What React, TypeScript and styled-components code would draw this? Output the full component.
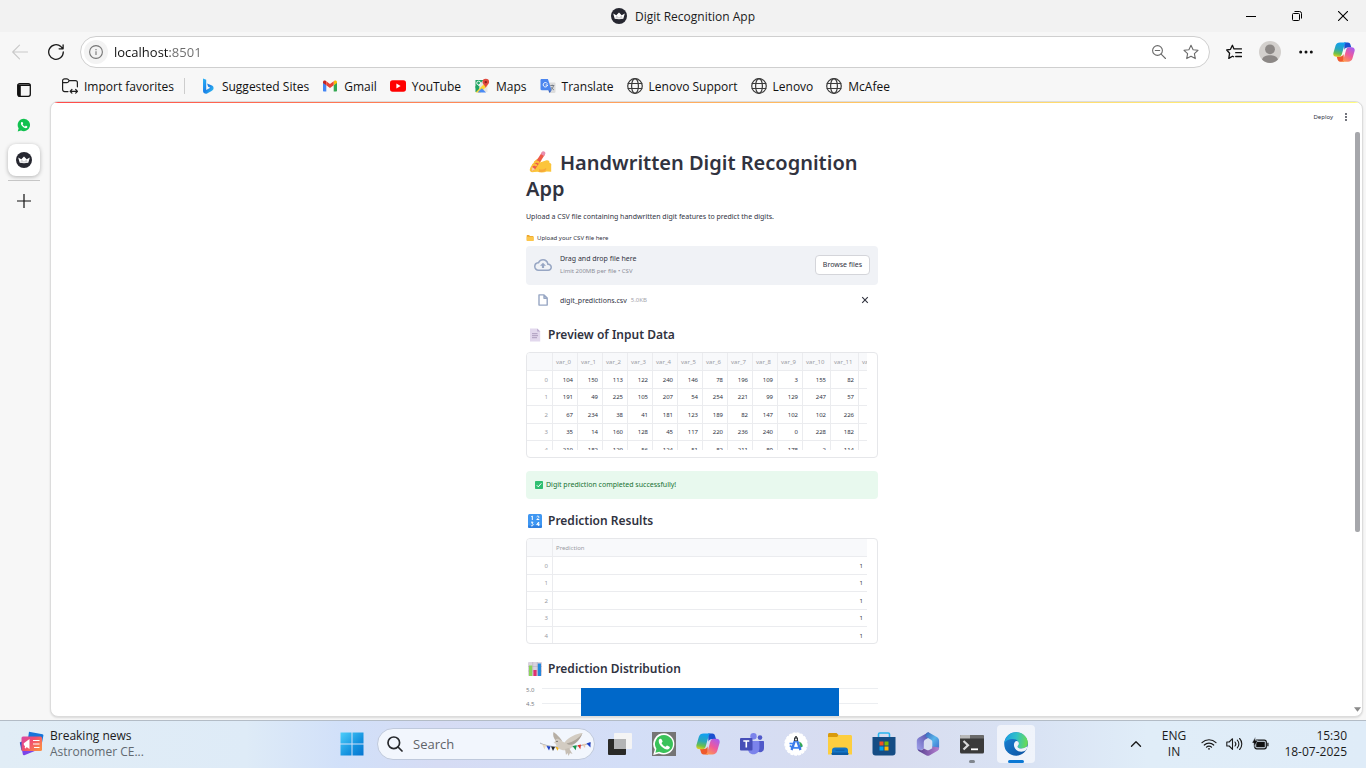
import React from 'react';
import styled, { createGlobalStyle, css } from 'styled-components';

const uiFont = '"Open Sans", "Noto Sans", sans-serif';
const appFont = '"Noto Sans", sans-serif';

const GlobalStyle = createGlobalStyle`
  *, *::before, *::after { box-sizing: border-box; }
  html, body { margin: 0; padding: 0; }
  body { font-family: ${uiFont}; font-size: 12px; color: #1b1b1b; background: #f7f7f7; }
  button, input { font: inherit; color: inherit; border: 0; background: none; padding: 0; margin: 0; outline: 0; }
  h1, h2, p { margin: 0; }
  svg { display: block; flex: none; }
`;

/* ---------- window frame ---------- */

const Window = styled.div`
  display: flex;
  flex-direction: column;
  height: 100vh;
  overflow: hidden;
`;

const TitleBar = styled.header`
  display: grid;
  grid-template-columns: 1fr auto 1fr;
  align-items: center;
  flex: none;
  height: 32px;
  background: #f2f2f2;
`;

const WindowTitle = styled.div`
  grid-column: 2;
  display: flex;
  align-items: center;
  gap: 8px;
`;

const WindowControls = styled.div`
  display: flex;
  justify-content: flex-end;
`;

const ControlButton = styled.button`
  display: grid;
  place-items: center;
  width: 46px;
  height: 32px;
`;

const Toolbar = styled.nav`
  display: flex;
  align-items: center;
  flex: none;
  height: 40px;
  padding: 0 2px;
`;

const ToolButton = styled.button<{ $wide?: boolean }>`
  display: grid;
  place-items: center;
  flex: none;
  width: ${(p) => (p.$wide ? 40 : 36)}px;
  height: 32px;
`;

const AddressBar = styled.form`
  display: flex;
  align-items: center;
  flex: 1;
  height: 32px;
  margin: 0 6px;
  padding: 0 2px 0 3px;
  border: 1px solid #cfcfcf;
  border-radius: 16px;
  background: #fff;
`;

const SiteInfo = styled.button`
  display: grid;
  place-items: center;
  width: 24px;
  height: 24px;
  border-radius: 12px;
  background: #f3f3f3;
`;

const AddressInput = styled.input`
  flex: 1;
  min-width: 0;
  margin-left: 6px;
  font-size: 13px;
  background: linear-gradient(90deg, #111 56px, #6b6b6b 56px);
  background-clip: text;
  color: transparent;
`;

const AddressAction = styled.button`
  display: grid;
  place-items: center;
  width: 32px;
  height: 28px;
`;

const Body = styled.div`
  display: flex;
  flex: 1;
  min-height: 0;
`;

const SideTabs = styled.aside`
  display: flex;
  flex-direction: column;
  align-items: center;
  flex: none;
  gap: 3px;
  width: 48px;
  margin-right: 2px;
  padding-top: 2px;
`;

const SideTab = styled.button<{ $active?: boolean }>`
  display: grid;
  place-items: center;
  width: 32px;
  height: 32px;
  border-radius: 8px;
  ${(p) =>
    p.$active &&
    css`
      background: #fff;
      box-shadow: 0 1px 4px rgba(0, 0, 0, 0.28);
    `}
`;

const SideDivider = styled.div`
  width: 32px;
  height: 1px;
  margin: 1px 0;
  background: #c6c6c6;
`;

const MainColumn = styled.div`
  display: flex;
  flex-direction: column;
  flex: 1;
  min-width: 0;
  padding: 0 3px 3px 0;
`;

const Bookmarks = styled.nav`
  display: flex;
  align-items: center;
  flex: none;
  gap: 13px;
  height: 28px;
  margin-bottom: 1px;
  padding-left: 12px;
`;

const BookmarkLink = styled.a`
  display: flex;
  align-items: center;
  gap: 6px;
  color: #111;
  text-decoration: none;
  white-space: nowrap;
`;

const BookmarkDivider = styled.span`
  width: 1px;
  height: 16px;
  margin: 0 2px 0 -3px;
  background: #cdcdcd;
`;

/* ---------- app page ---------- */

const Panel = styled.div`
  display: flex;
  flex: 1;
  min-height: 0;
  border: 1px solid #dcdcdc;
  border-radius: 8px;
  background: #fff;
  box-shadow: 0 1px 2px rgba(0, 0, 0, 0.12);
  overflow: hidden;
  font-family: ${appFont};
  color: #31333f;
`;

const Page = styled.div`
  display: flex;
  flex-direction: column;
  flex: 1;
  min-width: 0;
`;

const PanelColumn = styled.div`
  display: flex;
  flex-direction: column;
  flex: 1;
  min-width: 0;
`;

const AccentLine = styled.div`
  flex: none;
  height: 1px;
  background: linear-gradient(90deg, #ff4b4b, #ffc363 60%, #fffd80);
`;

const PageRow = styled.div`
  display: flex;
  flex: 1;
  min-height: 0;
`;

const AppHeader = styled.header`
  display: flex;
  align-items: center;
  justify-content: flex-end;
  flex: none;
  gap: 9px;
  height: 30px;
  padding: 0 3px 2px 0;
`;

const DeployButton = styled.button`
  font-size: 6px;
  line-height: 12px;
`;

const MenuButton = styled.button`
  display: grid;
  place-items: center;
  width: 8px;
  height: 12px;
`;

const Content = styled.main`
  width: 100%;
  max-width: 352px;
  margin: 0 auto;
  padding-top: 17px;
`;

const Title = styled.h1`
  font-size: 20px;
  font-weight: 600;
  line-height: 26px;

  svg {
    display: inline-block;
    margin: 0 8px 0 2px;
    vertical-align: -4px;
  }
`;

const Intro = styled.p`
  margin-top: 9px;
  font-size: 7px;
  line-height: 12px;
`;

const UploadLabel = styled.label`
  display: flex;
  align-items: center;
  gap: 3px;
  margin-top: 10px;
  font-size: 6px;
  line-height: 10px;
`;

const DropZone = styled.div`
  display: flex;
  align-items: center;
  height: 39px;
  margin-top: 3px;
  padding: 0 8px 1px;
  border-radius: 4px;
  background: #f0f2f6;
`;

const DropText = styled.div`
  display: flex;
  flex-direction: column;
  flex: 1;
  margin-left: 8px;
`;

const DropTitle = styled.span`
  font-size: 7px;
  line-height: 12px;
`;

const DropHint = styled.span`
  font-size: 6px;
  line-height: 12px;
  color: #8d8f99;
`;

const BrowseButton = styled.button`
  width: 55px;
  height: 20px;
  padding-bottom: 1px;
  border: 1px solid #d4d5da;
  border-radius: 4px;
  background: #fff;
  font-size: 7px;
`;

const FileRow = styled.div`
  display: flex;
  align-items: center;
  height: 30px;
  padding: 0 9px 0 12px;
`;

const FileName = styled.span`
  margin-left: 12px;
  font-size: 7px;
`;

const FileSize = styled.span`
  flex: 1;
  margin-left: 4px;
  font-size: 6px;
  color: #a3a4ac;
`;

const Heading = styled.h2<{ $space: number }>`
  display: flex;
  align-items: center;
  gap: 6px;
  margin-top: ${(p) => p.$space}px;
  padding-left: 2px;
  font-size: 12px;
  font-weight: 600;
  line-height: 17px;
`;

const TableFrame = styled.div`
  height: 106px;
  margin-top: 9px;
  padding-right: 10px;
  border: 1px solid #e6e7ea;
  border-radius: 4px;
  overflow: hidden;
`;

const TableClip = styled.div<{ $short?: boolean }>`
  height: ${(p) => (p.$short ? 97 : 104)}px;
  overflow: hidden;
`;

const DataTable = styled.table`
  width: 100%;
  table-layout: fixed;
  border-spacing: 0;
  font-size: 6px;
  line-height: 12px;

  tr { height: 18px; }
  tbody tr:nth-child(even) { height: 17px; }

  th, td {
    height: inherit;
    padding: 0 4px 0 3px;
    border-right: 1px solid #ebecef;
    border-bottom: 1px solid #ebecef;
    font-weight: 400;
    text-align: right;
    white-space: nowrap;
    overflow: hidden;
  }
  th { color: #9a9ba3; }
  thead th { padding-right: 0; background: #f8f9fb; text-align: left; }
  tr > :last-child { border-right: 0; }
`;

const Alert = styled.div`
  display: flex;
  align-items: center;
  gap: 3px;
  height: 28px;
  margin-top: 13px;
  padding: 0 9px 1px;
  border-radius: 4px;
  background: #e8f9ee;
  color: #177233;
  font-size: 7px;
`;

const Chart = styled.svg`
  width: 100%;
  height: 120px;
  margin-top: 7px;
  font-family: ${appFont};
  font-size: 6px;
  fill: #7d7f88;
`;

const ScrollRail = styled.div`
  display: flex;
  flex-direction: column;
  justify-content: space-between;
  align-items: center;
  flex: none;
  width: 9px;
  padding: 29px 0 4px;
`;

const ScrollThumb = styled.div`
  width: 5px;
  height: 69%;
  border-radius: 2px;
  background: #a6a7ab;
`;

/* ---------- taskbar ---------- */

const Taskbar = styled.footer`
  display: grid;
  grid-template-columns: 1fr auto 1fr;
  align-items: center;
  flex: none;
  height: 48px;
  padding: 0 0 2px 2px;
  border-top: 1px solid #b3bcc6;
  background: linear-gradient(90deg, #e1edf6 0%, #deebf7 18%, #d1e0f9 25%, #d6dcf4 32%, #d3def7 46%, #d8dcef 64%, #d9e3f4 76%, #e0edf8 84%, #dfecf8 100%);
`;

const Widget = styled.button`
  display: flex;
  align-items: center;
  justify-self: start;
  gap: 6px;
  padding-left: 17px;
  text-align: left;
  line-height: 16px;
`;

const WidgetText = styled.span`
  display: flex;
  flex-direction: column;
`;

const Muted = styled.span`
  color: #626a71;
`;

const TaskGroup = styled.div`
  display: flex;
  align-items: center;
`;

const TaskButton = styled.button`
  position: relative;
  display: grid;
  place-items: center;
  width: 44px;
  height: 45px;
`;

const TaskTile = styled.span<{ $active?: boolean }>`
  display: grid;
  place-items: center;
  width: 38px;
  height: 38px;
  border-radius: 4px;
  background: ${(p) => (p.$active ? 'rgba(255, 255, 255, 0.6)' : 'transparent')};
`;

const RunMark = styled.span<{ $active?: boolean }>`
  position: absolute;
  bottom: 3px;
  left: 50%;
  width: ${(p) => (p.$active ? 16 : 6)}px;
  height: 3px;
  border-radius: 2px;
  transform: translateX(-50%);
  background: ${(p) => (p.$active ? '#0b78d4' : '#80858d')};
`;

const SearchBox = styled.label`
  display: flex;
  align-items: center;
  gap: 10px;
  width: 218px;
  height: 32px;
  margin: 0 3px;
  padding: 0 1px 0 9px;
  border: 1px solid #bfc9dc;
  border-radius: 16px;
  background: #f2f6fd;
`;

const SearchInput = styled.input`
  flex: 1;
  min-width: 0;
  font-size: 13px;
  &::placeholder { color: #5f6368; opacity: 1; }
`;

const Tray = styled.div`
  display: flex;
  align-items: center;
  justify-content: flex-end;
  padding-right: 19px;
  line-height: 16px;
`;

const TrayButton = styled.button<{ $width: number }>`
  display: flex;
  align-items: center;
  justify-content: space-around;
  width: ${(p) => p.$width}px;
`;

const Stack = styled.span`
  display: flex;
  flex-direction: column;
  align-items: center;
`;

const Clock = styled.span`
  display: flex;
  flex: 1;
  flex-direction: column;
  align-items: flex-end;
`;

/* ---------- icons ---------- */

const line = { fill: 'none', stroke: 'currentColor', strokeLinecap: 'round', strokeLinejoin: 'round' } as const;

const CrownIcon = () => (
  <svg width="16" height="16" viewBox="0 0 16 16">
    <circle cx="8" cy="8" r="8" fill="#262730" />
    <path d="M2.2 5.600 5.300 7.200 8 4.600l2.700 2.600 3.100-1.600-1.500 5.200c-2.800.6-5.800.6-8.600 0z" fill="#fff" />
    <path d="M5.300 7.200 8 9.400l2.700-2.200 1 3.300H4.300z" fill="#d5d5d8" />
  </svg>
);

const StarPath = 'M8 1.2l2.1 4.5 4.9.6-3.600 3.400.9 4.900L8 12.200l-4.300 2.400.9-4.900L1 6.300l4.900-.6z';

const GlobeIcon = () => (
  <svg width="16" height="16" viewBox="0 0 16 16" {...line} stroke="#3b3b3b" strokeWidth="1.2">
    <circle cx="8" cy="8" r="7.3" />
    <ellipse cx="8" cy="8" rx="3.4" ry="7.3" />
    <path d="M1.2 5.500h13.600M1.200 10.500h13.600" />
  </svg>
);

const WhatsAppIcon = ({ size, boxed }: { size: number; boxed?: boolean }) => (
  <svg width={size} height={size} viewBox="0 0 24 24">
    {boxed && <path d="M0 0h24v24H0z" fill="#757575" />}
    <path d="M12 1.2A10.700 10.700 0 0 0 2.800 17.500L1.200 23l5.700-1.500A10.700 10.700 0 1 0 12 1.200z" fill={boxed ? '#fff' : '#12c150'} />
    {boxed && <path d="M12 3a9 9 0 0 0-7.600 13.800L3.400 20.700l3.900-1A9 9 0 1 0 12 3z" fill="#3ac25a" />}
    <path d="M8.300 6.800c-.5 0-1.600.7-1.600 2.300 0 4 5.200 8.400 8.600 8.400 1.500 0 2.500-1.100 2.600-2.400 0-.6-2.500-1.700-2.900-1.700-.6 0-1 1.300-1.500 1.300-.9 0-3.600-2.400-3.900-3.500 0-.5 1-1 1-1.600 0-.5-.9-2.500-1.300-2.700-.3-.1-.7-.1-1-.1z" fill="#fff" />
  </svg>
);

const CopilotIcon = ({ size, id }: { size: number; id: string }) => (
  <svg width={size} height={size} viewBox="0 0 24 24">
    <defs>
      <linearGradient id={`${id}a`} x1="0.3" y1="0" x2="0.1" y2="1">
        <stop offset="0" stopColor="#12a0f0" />
        <stop offset=".45" stopColor="#2ba7b8" />
        <stop offset=".75" stopColor="#6cc04a" />
        <stop offset="1" stopColor="#f5cf1c" />
      </linearGradient>
      <linearGradient id={`${id}b`} x1=".8" y1="0" x2=".2" y2="1">
        <stop offset="0" stopColor="#a75df0" />
        <stop offset=".5" stopColor="#ef5a9b" />
        <stop offset="1" stopColor="#ff9a4d" />
      </linearGradient>
    </defs>
    <path d="M12 1.500h4.300c1.400 0 2.300.8 2.700 2.200l1 3.400h-4c-2 0-2.900.8-3.500 2.600z" fill="#1a50d0" />
    <path d="M12 22.500H7.700c-1.400 0-2.300-.8-2.700-2.200l-1-3.400h4c2 0 2.900-.8 3.500-2.600z" fill="#ef5a2c" />
    <path d="M7.600 1.500h7.200c-1.300.4-1.900 1.500-2.400 3.200L9.800 14c-.6 2.100-1.600 3.200-3.500 3.200H3.600C1 17.200-.2 15.300.5 12.800l2.300-7.900C3.500 2.600 5.200 1.500 7.600 1.500z" fill={`url(#${id}a)`} />
    <path d="M16.400 22.500H9.200c1.300-.4 1.900-1.500 2.400-3.200l2.600-9.300c.6-2.100 1.600-3.200 3.500-3.200h2.700c2.600 0 3.800 1.900 3.100 4.400l-2.300 7.900c-.7 2.300-2.400 3.400-4.800 3.400z" fill={`url(#${id}b)`} />
  </svg>
);

const BingIcon = () => (
  <svg width="16" height="16" viewBox="0 0 16 16">
    <defs>
      <linearGradient id="bing" x1="0" y1="0" x2="1" y2="1">
        <stop offset="0" stopColor="#2bb6f6" /><stop offset=".5" stopColor="#1b7fe8" /><stop offset="1" stopColor="#35c8f0" />
      </linearGradient>
    </defs>
    <path d="M3 .5 6.200 1.800v10.200l4-2.300-2-1L7 5.600l5 1.900c1.200.6 1.800 1.700 1.500 3.200-.2 1-1 1.700-1.900 2.200l-4.500 2.600c-1.600.8-4.100-.3-4.100-2.500z" fill="url(#bing)" />
  </svg>
);

const GmailIcon = () => (
  <svg width="16" height="16" viewBox="0 0 16 16">
    <path d="M1 4v8.500c0 .6.400 1 1 1h2.300V7z" fill="#4285f4" />
    <path d="M15 4v8.500c0 .6-.4 1-1 1h-2.300V7z" fill="#34a853" />
    <path d="M11.700 3.400V7.300L15 5V4c0-1.500-1.600-2.100-2.700-1.200z" fill="#fbbc04" />
    <path d="M4.300 3.400V7.300L1 5V4c0-1.500 1.600-2.100 2.700-1.200z" fill="#c5221f" />
    <path d="M4.300 3.300 8 6.100l3.700-2.800v4L8 10.100 4.300 7.300z" fill="#ea4335" />
  </svg>
);

const YouTubeIcon = () => (
  <svg width="16" height="16" viewBox="0 0 16 16">
    <rect y="2.300" width="16" height="11.400" rx="2.600" fill="#f00" />
    <path d="M6.400 5.600v4.800L10.600 8z" fill="#fff" />
  </svg>
);

const MapsIcon = () => (
  <svg width="16" height="16" viewBox="0 0 16 16">
    <path d="M1.500 2h12v12h-12z" fill="#e8e6df" />
    <path d="M1.500 2h8L1.500 10.500z" fill="#1fa463" />
    <path d="M1.500 8h3.800v6H1.500z" fill="#1fa463" />
    <path d="M1.500 14.500 11 5l2.500 2.500L6.500 14.500z" fill="#fdd835" />
    <path d="M3.500 14.500 7.800 10.200l4.300 4.300z" fill="#4a8af4" />
    <circle cx="4.600" cy="5" r="1.900" fill="none" stroke="#fff" strokeWidth=".9" />
    <path d="M11.800.8a3.300 3.300 0 0 0-3.300 3.300c0 2.400 2.700 3 3.300 6 .6-3 3.300-3.600 3.300-6A3.300 3.300 0 0 0 11.800.8z" fill="#e04a3f" />
    <circle cx="11.800" cy="4.100" r="1.200" fill="#8c1d18" />
  </svg>
);

const TranslateIcon = () => (
  <svg width="16" height="16" viewBox="0 0 16 16">
    <path d="M6 4.500h8.300c.7 0 1.200.5 1.200 1.200v8c0 .7-.5 1.200-1.200 1.200H9z" fill="#dcdcdc" />
    <path d="M1.700 1h6.200l3.700 11.300H1.700c-.7 0-1.200-.5-1.200-1.200V2.200C.5 1.500 1 1 1.700 1z" fill="#4b86ef" />
    <path d="M8.300 12.300h3.300L9.700 15z" fill="#2f5fc4" />
    <path d="M7.300 5.600A2.200 2.200 0 1 0 7.600 7H5.600" fill="none" stroke="#fff" strokeWidth="1" />
    <path d="M10.300 7.500h4M12.300 6.700v.8M13.500 7.600c-.4 2-1.500 3.400-2.700 4.200M11.300 9.300c.6 1.200 1.500 2 2.600 2.600" stroke="#6f7782" strokeWidth=".9" fill="none" />
  </svg>
);

const ImportIcon = () => (
  <svg width="16" height="16" viewBox="0 0 16 16" {...line} stroke="#1f1f1f" strokeWidth="1.200">
    <path d="M6 13.600H2.600a2 2 0 0 1-2-2V2.800a2 2 0 0 1 2-2h2.200c.6 0 .9.200 1.300.6l1.200 1.200h6.100a2 2 0 0 1 2 2v4.200M.8 4.700h4c.6 0 .9-.2 1.300-.6l1.200-1.500M8.300 13.300h7M9.900 11.500l-1.800 1.800 1.800 1.800M13.700 11.500l1.800 1.800-1.800 1.800" />
  </svg>
);

const WritingHand = () => (
  <svg width="24" height="24" viewBox="0 0 24 24">
    <path d="M2 18.500c.5-2.500 3-4.500 4.500-7C8 9 10 8.500 12 8.500c1.500.1 2 1.600 1 2.700l-1 1.300 6.500-2.200c2.200-.3 3.200.9 2.900 2.400 1.800.4 2.300 1.700 1.800 3v6l-4.500-.2c-3 1.200-6.500 1.200-9.300.3L4 22.200c-1.800-.2-2.800-1.700-2-3.700z" fill="#fcc53b" />
    <path d="M11 19c3 1.200 6 .3 7-1.200 1 2-1 3.900-4 4.200h-3z" fill="#f7a93a" />
    <path d="M13.800 2.500 17 4.500 7.200 19.300 3.600 21.300l.7-4.200z" fill="#ee5a48" />
    <path d="m12.800 4 3.200 2 1.300-2.200C18.300 2 14.800.1 13.800 1.900z" fill="#e98fb0" />
    <path d="m4.300 17.100 2.900 2.200-3.600 2z" fill="#f7d3a4" />
    <path d="M6.500 12.300c2-1 3.800-.6 4.600.8M4.500 15c1.800-.7 3.600-.3 4.300 1" stroke="#fbbc3a" strokeWidth="2.200" fill="none" />
  </svg>
);

const FolderIcon = () => (
  <svg width="8" height="8" viewBox="0 0 8 8">
    <path d="M.7 1.600c0-.3.200-.5.500-.5h1.900l.8.800h3c.3 0 .5.200.5.500v4.200H.7z" fill="#eda62c" />
    <path d="M.7 2.800h7.100v3.500c0 .4-.2.600-.6.600H1.300c-.4 0-.6-.2-.6-.6z" fill="#fcc64c" />
  </svg>
);

const CloudUpIcon = () => (
  <svg width="18" height="18" viewBox="0 0 24 24" fill="#97a6c3">
    <path d="M19.350 10.040A7.490 7.490 0 0 0 12 4C9.110 4 6.600 5.640 5.350 8.040A5.994 5.994 0 0 0 0 14c0 3.310 2.690 6 6 6h13c2.760 0 5-2.240 5-5 0-2.640-2.050-4.780-4.650-4.960zM19 18H6c-2.210 0-4-1.790-4-4 0-2.050 1.530-3.760 3.560-3.970l1.070-.11.500-.95A5.469 5.469 0 0 1 12 6c2.620 0 4.880 1.860 5.390 4.430l.3 1.500 1.530.11A2.980 2.980 0 0 1 22 15c0 1.650-1.350 3-3 3zM8 13h2.550v3h2.900v-3H16l-4-4z" />
  </svg>
);

const FileIcon = () => (
  <svg width="10" height="12" viewBox="0 0 10 12" fill="none" stroke="#97a6c3" strokeWidth="1.400" strokeLinejoin="round">
    <path d="M1 .9h5L9.200 4.100v7H1zM6 .9v3.400h3.200" />
  </svg>
);

const PageEmoji = () => (
  <svg width="14" height="14" viewBox="0 0 14 14">
    <path d="M2 .5h7.200L12.200 3.500v10H2z" fill="#e2d8ed" />
    <path d="M9.200.5 12.200 3.500h-3z" fill="#b9a9cc" />
    <path d="M4 5.700h5.500M4 7.700h6M4 9.700h5" stroke="#a795b8" strokeWidth=".9" />
  </svg>
);

const NumbersEmoji = () => (
  <svg width="14" height="14" viewBox="0 0 14 14">
    <rect width="14" height="14" rx="1.500" fill="#3f97f2" />
    <path d="M0 11.500h14v1c0 .8-.6 1.500-1.500 1.500h-11C.6 14 0 13.300 0 12.500z" fill="#2f7fe0" />
    <g fill="none" stroke="#fff" strokeWidth="1">
      <path d="M3.300 2.600 4.300 2v4M8.700 2.800c.7-1.200 2.400-.8 2.200.4-.1.800-1.300 1.400-2.100 2.300h2.500M3 8.200h2L4 9.600c1.600 0 1.500 2.200-.1 2.200-.4 0-.8-.1-1-.4M10.700 12V8L8.700 10.700h2.800" />
    </g>
  </svg>
);

const BarsEmoji = () => (
  <svg width="14" height="14" viewBox="0 0 14 14">
    <rect width="14" height="14" rx="1" fill="#d9d2de" />
    <path d="M0 4.500h14M0 9h14M4.700 0v14M9.300 0v14" stroke="#b8afc0" strokeWidth=".6" />
    <path d="M1 3.500h3.200V14H1z" fill="#8bd45a" />
    <path d="M5.400 8h3.200v6H5.400z" fill="#e0316f" />
    <path d="M9.800 1.500H13V14H9.800z" fill="#2587dc" />
  </svg>
);

const CheckEmoji = () => (
  <svg width="8" height="8" viewBox="0 0 8 8">
    <rect width="8" height="8" rx=".8" fill="#2fbf71" />
    <path d="M1.800 4.200 3.300 5.800 6.300 2.300" fill="none" stroke="#fff" strokeWidth="1" />
  </svg>
);

const NewsIcon = () => (
  <svg width="25" height="25" viewBox="0 0 25 25">
    <defs>
      <linearGradient id="news" x1="0" y1="0" x2="1" y2=".7">
        <stop offset="0" stopColor="#d846a8" /><stop offset=".5" stopColor="#f0506f" /><stop offset="1" stopColor="#fb8a45" />
      </linearGradient>
    </defs>
    <path d="M10 .8 23.500 3.200c.7.1 1 .6.900 1.200L22 17 8 14z" fill="#1675db" />
    <path d="M1.500 12 17 19.500 5.300 24.300c-.7.200-1.200 0-1.400-.7z" fill="#7c46e8" />
    <path d="M.8 11.500 6 9v9l-3.500 1.500z" fill="#2855c8" />
    <rect x="2.500" y="5.500" width="20.500" height="14.500" rx="1.500" fill="url(#news)" />
    <path d="M4.800 13.800v-1.600L10.500 8v10l-3-1.900-.5 1.400-1.300-.4.300-1.900z" fill="#fff" />
    <path d="M14 9.500h6.500M14 13h6.500M15 16.500h5.500" stroke="#fff" strokeWidth="1.200" />
  </svg>
);

const StartIcon = () => (
  <svg width="24" height="24" viewBox="0 0 24 24">
    <defs>
      <linearGradient id="start" x1="0" y1="0" x2="24" y2="24" gradientUnits="userSpaceOnUse">
        <stop offset="0" stopColor="#4fd0fb" /><stop offset=".6" stopColor="#1492df" /><stop offset="1" stopColor="#0573cf" />
      </linearGradient>
    </defs>
    <path d="M.5.5h11v11H.5zM12.500.5h11v11h-11zM.5 12.500h11v11H.5zM12.500 12.500h11v11h-11z" fill="url(#start)" />
  </svg>
);

const DoveArt = () => (
  <svg width="54" height="26" viewBox="0 0 54 26">
    <path d="M1 12c9 5 32 6 51 0" fill="none" stroke="#8a8d94" strokeWidth=".7" />
    <path d="m3 13 4 1.500-1.500 4z" fill="#e8d9c4" />
    <path d="m7.500 15 4 .5-1.500 4z" fill="#1d3fc4" />
    <path d="m12 15.500 4 .5-2 4z" fill="#23262b" />
    <path d="m16.500 16 4-.3-2 4z" fill="#f2b31c" />
    <path d="m33.500 15 4.200-.7-1 5z" fill="#17964a" />
    <path d="m38.500 14.300 3.500-.7-.7 4.700z" fill="#e0352c" />
    <path d="m43 13.500 3.500-1-.5 4.500z" fill="#e8c9b0" />
    <path d="m47.500 12.500 4-1.500 0 5.500z" fill="#1d3fc4" />
    <path d="M14.500 1c1.500 1 6 4.500 8.500 9l-5 1C14.500 8 13.600 4 14.500 1z" fill="#b7afa5" />
    <path d="M43.500 2c-6 .5-14 4-18 9.500-2-1-3.500-2-6-3.500-2.500-.6-3.500 1-3.700 3l-1.300 1 1.800.2c1.500 5 5.500 7.500 10.500 7 4-.4 6-2.500 7.500-5.500 4-2.500 7.200-7 9.200-11.700z" fill="#d3ccc2" />
    <path d="M43.500 2c-3 5-9 9-16 10.500 2 2 6 1.500 9-.5 3.500-2.500 5.500-6 7-10z" fill="#aca49b" />
    <path d="m26 18 1 6 1.500-2 1 3 1.500-3 2.500 1-3.500-6z" fill="#c6beb4" />
    <circle cx="18" cy="10.300" r=".6" fill="#2b2b2b" />
  </svg>
);

const TaskViewIcon = () => (
  <svg width="24" height="24" viewBox="0 0 24 24">
    <rect x="0" y="7" width="18" height="16" rx="1" fill="#2a2a28" />
    <rect x="6" y="1" width="18" height="16" rx="1" fill="#f4f4f5" />
    <path d="M6 7h12v10H6z" fill="#b3b4b5" />
  </svg>
);

const TeamsIcon = () => (
  <svg width="24" height="24" viewBox="0 0 24 24">
    <circle cx="13.500" cy="4.200" r="3.200" fill="#7b83eb" />
    <circle cx="20" cy="5.600" r="2.300" fill="#5059c9" />
    <path d="M17 9h6c.6 0 1 .4 1 1v6c0 2.500-1.600 4.300-4 4.300-1.500 0-3-.8-3-2z" fill="#5059c9" />
    <path d="M8 9h10.500c.5 0 .9.400.9.900V16c0 3.800-2.500 6.300-6 6.300S8 19.800 8 16.500z" fill="#7b83eb" />
    <rect y="6" width="12.500" height="12.500" rx="1" fill="#464eb8" />
    <path d="M3.300 9h6M6.300 9v6.500" stroke="#fff" strokeWidth="1.600" />
  </svg>
);

const AndroidStudioIcon = () => (
  <svg width="24" height="24" viewBox="0 0 24 24">
    <circle cx="12" cy="12" r="11" fill="#fff" stroke="#fff" strokeWidth="1.500" strokeDasharray="3 1" />
    <path d="M6 13.500c2 3.200 10 3.200 12 0" fill="none" stroke="#4285f4" strokeWidth="1.800" />
    <path d="M15 9.500c2.500 1 4 3 3.500 5l-2 .8z" fill="#34a853" />
    <path d="M11.200 8 7.500 18M12.800 8l3.700 10" stroke="#3b79e8" strokeWidth="2.300" fill="none" />
    <path d="M5.500 11.500h4" stroke="#4285f4" strokeWidth="1.600" />
    <path d="M11.200 4h1.600v1.500h1.200V9h-4V5.500h1.200z" fill="#34383d" />
    <circle cx="12" cy="7.600" r="1" fill="#e9eef5" />
  </svg>
);

const ExplorerIcon = () => (
  <svg width="24" height="24" viewBox="0 0 24 24">
    <path d="M0 2.500C0 1.600.6 1 1.500 1h7L10.500 3v4H0z" fill="#d99a0b" />
    <path d="M0 5h9l2-2h11.500c.9 0 1.500.6 1.500 1.500v18H0z" fill="#fdce3f" />
    <path d="M4 22.500v-4C4 16.500 5 15.500 7 15.500h10c2 0 3 1 3 3v4z" fill="#1374c5" />
    <path d="M7.500 18.200h9M4 22.500v-1.500h16v1.500z" stroke="#0c5ba3" fill="#0c5ba3" />
  </svg>
);

const StoreIcon = () => (
  <svg width="24" height="24" viewBox="0 0 24 24">
    <path d="M6.500 6V2.200C6.500 1.500 7 1 7.700 1h8.600c.7 0 1.200.5 1.200 1.200V6" fill="none" stroke="#29b4ee" strokeWidth="1.600" />
    <path d="M.5 5h23v15.500c0 2-1 3-3 3h-17c-2 0-3-1-3-3z" fill="#154c84" />
    <path d="M7.500 9.500h4v4h-4z" fill="#f25022" />
    <path d="M12.500 9.500h4v4h-4z" fill="#7fba00" />
    <path d="M7.500 14.500h4v4h-4z" fill="#00a4ef" />
    <path d="M12.500 14.500h4v4h-4z" fill="#ffb900" />
  </svg>
);

const OfficeIcon = () => (
  <svg width="24" height="24" viewBox="0 0 24 24">
    <defs>
      <linearGradient id="officeLeft" x1="1" y1="0" x2="0" y2="1">
        <stop offset="0" stopColor="#4a3f9c" /><stop offset="1" stopColor="#a3a5ee" />
      </linearGradient>
      <linearGradient id="officeRight" x1="0" y1="0" x2="1" y2="1">
        <stop offset="0" stopColor="#3b63b8" /><stop offset=".5" stopColor="#58b4ea" /><stop offset="1" stopColor="#3f6ccc" />
      </linearGradient>
      <linearGradient id="officeBase" x1="0" y1="0" x2="1" y2="0">
        <stop offset="0" stopColor="#54408f" /><stop offset="1" stopColor="#b77fd0" />
      </linearGradient>
    </defs>
    <path d="M12.500.2 3 5.400C1.600 6.200.8 7.500.8 9v6.800c0 2.200 2 3.600 4 2.500l3-1.800V10c0-1 .4-1.700 1.200-2.200L15.500 4z" fill="url(#officeLeft)" />
    <path d="M10.500.9c1-.6 2.200-.6 3.200 0l7.100 4c1.600.9 2.300 2.200 2.300 4v6.500c0 1-.5 2-1.300 2.500l-5.500-2.500V10c0-1-.4-1.800-1.300-2.300L9 4.300z" fill="url(#officeRight)" />
    <path d="m1.700 17.300 3.100 1c1 0 2-.7 3-1.800l3 1.400c.8.400 1.600.4 2.400 0l3.100-1.600v-1.700l6.800.8c0 1.700-.9 3-2.400 3.900l-6.900 4c-1.200.7-2.500.7-3.700 0L3 19.200c-.8-.5-1.200-1.100-1.300-1.900z" fill="url(#officeBase)" />
  </svg>
);

const TerminalIcon = () => (
  <svg width="24" height="24" viewBox="0 0 24 24">
    <rect y="3" width="24" height="18.500" rx="1.500" fill="#3a3a3a" />
    <path d="M0 6.500v-2C0 3.600.6 3 1.500 3H10v3.500z" fill="#b8b8b8" />
    <path d="M10 3h12.500c.9 0 1.500.6 1.500 1.500v2H10z" fill="#6b6b6b" />
    <path d="m3.500 9 4.500 4.200L3.500 17.500" fill="none" stroke="#d9d9d9" strokeWidth="2.200" />
    <path d="M11 17.300h7" stroke="#fff" strokeWidth="1.800" />
  </svg>
);

const EdgeIcon = () => (
  <svg width="24" height="24" viewBox="0 0 24 24">
    <defs>
      <linearGradient id="edgeTop" x1="0" y1=".4" x2="1" y2=".5">
        <stop offset="0" stopColor="#1b9de2" /><stop offset=".5" stopColor="#2fc0c8" /><stop offset="1" stopColor="#6bdc50" />
      </linearGradient>
      <linearGradient id="edgeBody" x1="0" y1="0" x2="1" y2="1">
        <stop offset="0" stopColor="#1a86d8" /><stop offset="1" stopColor="#0c4f9e" />
      </linearGradient>
    </defs>
    <circle cx="12" cy="12" r="11.800" fill="url(#edgeBody)" />
    <path d="M.3 11.500C.8 5 5.800.2 12 .2c7 0 11.800 5 11.800 10.500 0 3.600-2.800 5.800-6.300 5.800-3 0-4.600-1.200-3.600-2.700.6-1 1-1.600.9-2.600C14.600 8.700 12 7 8.800 7 4.800 7 1.300 9 .3 11.500z" fill="url(#edgeTop)" />
    <path d="M14.900 11.400c0 1-.5 1.700-1 2.400-1 1.500.6 2.700 3.600 2.700 2 0 3.500-.7 4.600-1.700l1.500-.3c-.3 1.500-1 2.800-1.600 3.800-1.300.9-3 1.400-4.700 1.400-4.200 0-7.300-3-7.400-6.600 0-2.200 1.200-4 2.800-4.100 1.300 0 2.200.9 2.200 2.400z" fill="#eef3fa" />
  </svg>
);

/* ---------- data ---------- */

const bookmarks = [
  { label: 'Suggested Sites', icon: <BingIcon /> },
  { label: 'Gmail', icon: <GmailIcon /> },
  { label: 'YouTube', icon: <YouTubeIcon /> },
  { label: 'Maps', icon: <MapsIcon /> },
  { label: 'Translate', icon: <TranslateIcon /> },
  { label: 'Lenovo Support', icon: <GlobeIcon /> },
  { label: 'Lenovo', icon: <GlobeIcon /> },
  { label: 'McAfee', icon: <GlobeIcon /> },
];

const inputColumns = ['var_0', 'var_1', 'var_2', 'var_3', 'var_4', 'var_5', 'var_6', 'var_7', 'var_8', 'var_9', 'var_10', 'var_11'];

const inputRows = [
  [104, 150, 113, 122, 240, 146, 78, 196, 109, 3, 155, 82],
  [191, 49, 225, 105, 207, 54, 254, 221, 99, 129, 247, 57],
  [67, 234, 38, 41, 181, 123, 189, 82, 147, 102, 102, 226],
  [35, 14, 160, 128, 45, 117, 220, 236, 240, 0, 228, 182],
  [210, 182, 120, 56, 124, 51, 82, 211, 89, 178, 2, 114],
];

const predictions = [1, 1, 1, 1, 1];

const apps = [
  { name: 'Task view', icon: <TaskViewIcon /> },
  { name: 'WhatsApp', icon: <WhatsAppIcon size={24} boxed /> },
  { name: 'Copilot', icon: <CopilotIcon size={24} id="task" /> },
  { name: 'Teams', icon: <TeamsIcon /> },
  { name: 'Android Studio', icon: <AndroidStudioIcon /> },
  { name: 'File Explorer', icon: <ExplorerIcon /> },
  { name: 'Store', icon: <StoreIcon /> },
  { name: 'Microsoft 365', icon: <OfficeIcon /> },
  { name: 'Terminal', icon: <TerminalIcon />, running: true },
  { name: 'Edge', icon: <EdgeIcon />, running: true, active: true },
];

/* ---------- sections ---------- */

const BrowserTop = () => (
  <>
    <TitleBar>
      <WindowTitle>
        <CrownIcon />
        <span>Digit Recognition App</span>
      </WindowTitle>
      <WindowControls>
        <ControlButton aria-label="Minimize">
          <svg width="10" height="10" viewBox="0 0 10 10"><path d="M0 5.500h10" stroke="#000" /></svg>
        </ControlButton>
        <ControlButton aria-label="Restore">
          <svg width="10" height="10" viewBox="0 0 10 10" fill="none" stroke="#000">
            <rect x=".5" y="2.500" width="7" height="7" rx="1" />
            <path d="M2.500.5h5a2 2 0 0 1 2 2v5" />
          </svg>
        </ControlButton>
        <ControlButton aria-label="Close">
          <svg width="10" height="10" viewBox="0 0 10 10"><path d="m0 0 10 10M10 0 0 10" stroke="#000" strokeWidth="1.100" /></svg>
        </ControlButton>
      </WindowControls>
    </TitleBar>
    <Toolbar aria-label="Navigation">
      <ToolButton aria-label="Back">
        <svg width="16" height="16" viewBox="0 0 16 16" {...line} stroke="#c9c9c9" strokeWidth="1.100"><path d="M15.500 8H.7M7.500 1.200.7 8l6.800 6.800" /></svg>
      </ToolButton>
      <ToolButton aria-label="Refresh">
        <svg width="16" height="16" viewBox="0 0 16 16" {...line} stroke="#1a1a1a" strokeWidth="1.300"><path d="M15.300 8A7.300 7.300 0 1 1 12.900 2.600L15 4.700M15.100.8v4h-4" /></svg>
      </ToolButton>
      <AddressBar>
        <SiteInfo type="button" aria-label="Site information">
          <svg width="14" height="14" viewBox="0 0 14 14" fill="none" stroke="#767676" strokeWidth="1.100"><circle cx="7" cy="7" r="6.400" /><path d="M7 6.300V10M7 4v1.300" /></svg>
        </SiteInfo>
        <AddressInput aria-label="Address" defaultValue="localhost:8501" spellCheck={false} />
        <AddressAction type="button" aria-label="Zoom">
          <svg width="14" height="14" viewBox="0 0 14 14" {...line} stroke="#6a6a6a" strokeWidth="1.100"><circle cx="5.500" cy="5.500" r="4.900" /><path d="m9.100 9.100 4.400 4.400M3.300 5.500h4.400" /></svg>
        </AddressAction>
        <AddressAction type="button" aria-label="Add to favorites">
          <svg width="16" height="16" viewBox="0 0 16 16" {...line} stroke="#6a6a6a" strokeWidth="1.100"><path d={StarPath} /></svg>
        </AddressAction>
      </AddressBar>
      <ToolButton aria-label="Favorites">
        <svg width="16" height="16" viewBox="0 0 16 16" {...line} stroke="#111" strokeWidth="1.300"><path d="M8 4.900 6.400 1.300 4.500 5.300.7 6l2.900 3.200-.8 5.200 3.700-2.200 1.100.6M8 4.900h7.500M9.700 8.700h5.800M9.700 12.500h5.800" /></svg>
      </ToolButton>
      <ToolButton aria-label="Profile">
        <svg width="22" height="22" viewBox="0 0 22 22"><circle cx="11" cy="11" r="11" fill="#d3d0cd" /><circle cx="11" cy="8.300" r="4.900" fill="#8c8886" /><path d="M3 18.500c1-3 4.300-4.300 8-4.300s7 1.300 8 4.300a11 11 0 0 1-16 0z" fill="#8c8886" /></svg>
      </ToolButton>
      <ToolButton aria-label="Settings and more">
        <svg width="14" height="4" viewBox="0 0 14 4" fill="#111"><circle cx="1.700" cy="2" r="1.500" /><circle cx="7" cy="2" r="1.500" /><circle cx="12.300" cy="2" r="1.500" /></svg>
      </ToolButton>
      <ToolButton $wide aria-label="Copilot"><CopilotIcon size={22} id="tool" /></ToolButton>
    </Toolbar>
  </>
);

const Uploader = () => (
  <>
    <UploadLabel htmlFor="browse"><FolderIcon />Upload your CSV file here</UploadLabel>
    <DropZone>
      <CloudUpIcon />
      <DropText>
        <DropTitle>Drag and drop file here</DropTitle>
        <DropHint>Limit 200MB per file • CSV</DropHint>
      </DropText>
      <BrowseButton id="browse">Browse files</BrowseButton>
    </DropZone>
    <FileRow>
      <FileIcon />
      <FileName>digit_predictions.csv</FileName>
      <FileSize>5.0KB</FileSize>
      <button aria-label="Remove file">
        <svg width="8" height="8" viewBox="0 0 8 8"><path d="m1.200 1.200 5.600 5.600M6.800 1.200 1.200 6.800" stroke="#31333f" strokeWidth="1.100" /></svg>
      </button>
    </FileRow>
  </>
);

const InputTable = () => (
  <TableFrame>
    <TableClip $short>
      <DataTable>
        <colgroup>
          <col width="26" />
          {inputColumns.map((c, i) => <col key={c} width={i < 10 ? 25 : 28} />)}
          <col />
        </colgroup>
        <thead>
          <tr><th />{inputColumns.map((c) => <th key={c}>{c}</th>)}<th>va</th></tr>
        </thead>
        <tbody>
          {inputRows.map((row, i) => (
            <tr key={i}><th scope="row">{i}</th>{row.map((v, j) => <td key={j}>{v}</td>)}<td /></tr>
          ))}
        </tbody>
      </DataTable>
    </TableClip>
  </TableFrame>
);

const ResultTable = () => (
  <TableFrame>
    <TableClip>
      <DataTable>
        <colgroup><col width="26" /><col /></colgroup>
        <thead><tr><th /><th>Prediction</th></tr></thead>
        <tbody>
          {predictions.map((v, i) => <tr key={i}><th scope="row">{i}</th><td>{v}</td></tr>)}
        </tbody>
      </DataTable>
    </TableClip>
  </TableFrame>
);

const DistributionChart = () => (
  <Chart role="img" aria-label="Prediction Distribution">
    <path d="M16 4.500h336M16 19.500h336" stroke="#eceef1" />
    <rect x="55" y="4" width="258" height="116" fill="#0068c9" />
    <text x="0" y="8">5.0</text>
    <text x="0" y="22">4.5</text>
  </Chart>
);

const AppPage = () => (
  <Panel>
    <PanelColumn>
      <AccentLine />
      <PageRow>
        <Page>
          <AppHeader>
            <DeployButton>Deploy</DeployButton>
            <MenuButton aria-label="Main menu">
              <svg width="2" height="8" viewBox="0 0 2 8" fill="#31333f"><circle cx="1" cy="1" r=".9" /><circle cx="1" cy="4" r=".9" /><circle cx="1" cy="7" r=".9" /></svg>
            </MenuButton>
          </AppHeader>
          <Content>
            <Title><WritingHand />Handwritten Digit Recognition App</Title>
            <Intro>Upload a CSV file containing handwritten digit features to predict the digits.</Intro>
            <Uploader />
            <Heading $space={11}><PageEmoji />Preview of Input Data</Heading>
            <InputTable />
            <Alert role="status"><CheckEmoji />Digit prediction completed successfully!</Alert>
            <Heading $space={13}><NumbersEmoji />Prediction Results</Heading>
            <ResultTable />
            <Heading $space={16}><BarsEmoji />Prediction Distribution</Heading>
            <DistributionChart />
          </Content>
        </Page>
        <ScrollRail aria-hidden="true">
          <ScrollThumb />
          <svg width="7" height="5" viewBox="0 0 7 5"><path d="M0 .3h7L3.500 4.800z" fill="#8a8a8a" /></svg>
        </ScrollRail>
      </PageRow>
    </PanelColumn>
  </Panel>
);

const SystemTaskbar = () => (
  <Taskbar>
    <Widget>
      <NewsIcon />
      <WidgetText>
        <span>Breaking news</span>
        <Muted>Astronomer CE...</Muted>
      </WidgetText>
    </Widget>
    <TaskGroup>
      <TaskButton aria-label="Start"><StartIcon /></TaskButton>
      <SearchBox>
        <svg width="16" height="16" viewBox="0 0 16 16" {...line} stroke="#26282c" strokeWidth="1.700"><circle cx="6.800" cy="6.800" r="5.800" /><path d="m11 11 4 4" /></svg>
        <SearchInput placeholder="Search" aria-label="Search" />
        <DoveArt />
      </SearchBox>
      {apps.map((app) => (
        <TaskButton key={app.name} aria-label={app.name}>
          <TaskTile $active={app.active}>{app.icon}</TaskTile>
          {app.running && <RunMark $active={app.active} />}
        </TaskButton>
      ))}
    </TaskGroup>
    <Tray>
      <TrayButton $width={32} aria-label="Hidden icons">
        <svg width="12" height="8" viewBox="0 0 12 8" {...line} stroke="#1b1b1b" strokeWidth="1.400"><path d="m1.500 6.200 4.500-4.500 4.500 4.500" /></svg>
      </TrayButton>
      <TrayButton $width={44}><Stack><span>ENG</span><span>IN</span></Stack></TrayButton>
      <TrayButton $width={77} aria-label="Network, volume, battery">
        <svg width="16" height="12" viewBox="0 0 16 12" {...line} stroke="#1b1b1b" strokeWidth="1.200"><path d="M1 4.600a10 10 0 0 1 14 0M3.300 7a6.700 6.700 0 0 1 9.400 0M5.500 9.200a3.500 3.500 0 0 1 5 0" /><circle cx="8" cy="10.800" r=".9" fill="#1b1b1b" stroke="none" /></svg>
        <svg width="17" height="14" viewBox="0 0 17 14" {...line} stroke="#1b1b1b" strokeWidth="1.100"><path d="M.8 5v4h2.400l3.300 3.300V1.700L3.200 5zM9 5a3 3 0 0 1 0 4M11.300 3.200a5.400 5.400 0 0 1 0 7.600M13.600 1.500a8 8 0 0 1 0 11" /></svg>
        <svg width="17" height="14" viewBox="0 0 17 14"><rect x="2.700" y="3.200" width="11.600" height="8.600" rx="2" fill="none" stroke="#111" strokeWidth="1.200" /><path d="M4.200 4.700h8.600v5.600H4.200zM15.300 5.800h1.200v3.400h-1.200z" fill="#111" /><path d="M3.300 0v3.500h2.500L1.800 10V6H0z" fill="#111" stroke="#dfecf8" strokeWidth=".4" /></svg>
      </TrayButton>
      <TrayButton $width={74}>
        <Clock><span>15:30</span><span>18-07-2025</span></Clock>
      </TrayButton>
    </Tray>
  </Taskbar>
);

export default function App() {
  return (
    <Window>
      <GlobalStyle />
      <BrowserTop />
      <Body>
        <SideTabs>
          <SideTab aria-label="Tab actions">
            <svg width="14" height="14" viewBox="0 0 14 14" fill="none" stroke="#111" strokeWidth="1.300"><rect x=".7" y=".7" width="12.600" height="12.600" rx="2" /><path d="M.7 2.200h12.600" strokeWidth="1.600" /><path d="M2.400 2v11.500" strokeWidth="2.800" /></svg>
          </SideTab>
          <SideTab aria-label="WhatsApp"><WhatsAppIcon size={14} /></SideTab>
          <SideTab $active aria-label="Current tab"><CrownIcon /></SideTab>
          <SideDivider />
          <SideTab aria-label="New tab">
            <svg width="14" height="14" viewBox="0 0 14 14"><path d="M7 0v14M0 7h14" stroke="#111" strokeWidth="1.200" /></svg>
          </SideTab>
        </SideTabs>
        <MainColumn>
          <Bookmarks aria-label="Favorites bar">
            <BookmarkLink href="#"><ImportIcon />Import favorites</BookmarkLink>
            <BookmarkDivider />
            {bookmarks.map((b) => <BookmarkLink key={b.label} href="#">{b.icon}{b.label}</BookmarkLink>)}
          </Bookmarks>
          <AppPage />
        </MainColumn>
      </Body>
      <SystemTaskbar />
    </Window>
  );
}
